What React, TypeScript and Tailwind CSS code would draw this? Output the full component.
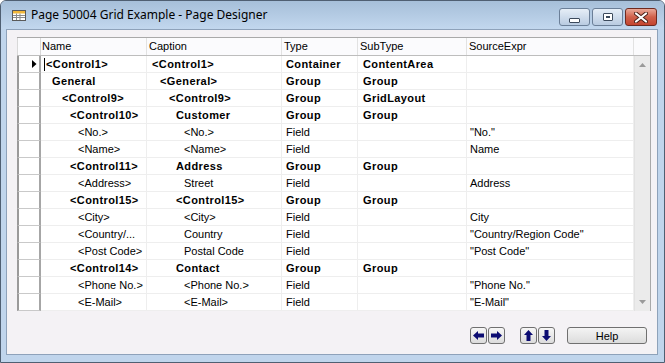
import React from 'react';

type Row = { n: string; c: string; t: string; s: string; e: string; l: number; b?: boolean };

const rows: Row[] = [
  { n: '<Control1>', c: '<Control1>', t: 'Container', s: 'ContentArea', e: '', l: 0, b: true },
  { n: 'General', c: '<General>', t: 'Group', s: 'Group', e: '', l: 1, b: true },
  { n: '<Control9>', c: '<Control9>', t: 'Group', s: 'GridLayout', e: '', l: 2, b: true },
  { n: '<Control10>', c: 'Customer', t: 'Group', s: 'Group', e: '', l: 3, b: true },
  { n: '<No.>', c: '<No.>', t: 'Field', s: '', e: '"No."', l: 4 },
  { n: '<Name>', c: '<Name>', t: 'Field', s: '', e: 'Name', l: 4 },
  { n: '<Control11>', c: 'Address', t: 'Group', s: 'Group', e: '', l: 3, b: true },
  { n: '<Address>', c: 'Street', t: 'Field', s: '', e: 'Address', l: 4 },
  { n: '<Control15>', c: '<Control15>', t: 'Group', s: 'Group', e: '', l: 3, b: true },
  { n: '<City>', c: '<City>', t: 'Field', s: '', e: 'City', l: 4 },
  { n: '<Country/...', c: 'Country', t: 'Field', s: '', e: '"Country/Region Code"', l: 4 },
  { n: '<Post Code>', c: 'Postal Code', t: 'Field', s: '', e: '"Post Code"', l: 4 },
  { n: '<Control14>', c: 'Contact', t: 'Group', s: 'Group', e: '', l: 3, b: true },
  { n: '<Phone No.>', c: '<Phone No.>', t: 'Field', s: '', e: '"Phone No."', l: 4 },
  { n: '<E-Mail>', c: '<E-Mail>', t: 'Field', s: '', e: '"E-Mail"', l: 4 },
];

const nameIndent = ['pl-[3px]', 'pl-[11px]', 'pl-[21px]', 'pl-[29px]', 'pl-[37px]'];
const capIndent = ['pl-[5px]', 'pl-[13px]', 'pl-[22px]', 'pl-[29px]', 'pl-[37px]'];

function CaptionButton({ kind }: { kind: 'min' | 'max' | 'close' }) {
  const base = 'h-[18px] rounded-[3px] border flex items-center justify-center';
  if (kind === 'close') {
    return (
      <div className={`${base} w-[32px] border-[#6e2a20] bg-gradient-to-b from-[#e9a898] via-[#d0614b] to-[#c4442f]`}>
        <svg width="14" height="11" viewBox="0 0 14 11">
          <path d="M2 1.5 L12 9.5 M12 1.5 L2 9.5" stroke="#4a2018" strokeWidth="4" strokeLinecap="round" />
          <path d="M2 1.5 L12 9.5 M12 1.5 L2 9.5" stroke="#ffffff" strokeWidth="2.2" strokeLinecap="round" />
        </svg>
      </div>
    );
  }
  return (
    <div className={`${base} w-[31px] border-[#6b7f98] bg-gradient-to-b from-[#e6eef7] to-[#b9cbe1]`}>
      {kind === 'min' ? (
        <div className="mt-[6px] w-[11px] h-[5px] rounded-[1px] border border-[#3c4a5c] bg-white" />
      ) : (
        <div className="w-[10px] h-[8px] rounded-[1px] border border-[#3c4a5c] bg-white flex items-center justify-center">
          <div className="w-[4px] h-[2px] bg-[#3c4a5c]" />
        </div>
      )}
    </div>
  );
}

function ArrowBtn({ dir }: { dir: 'left' | 'right' | 'up' | 'down' }) {
  const rot = { left: 0, right: 180, up: 90, down: 270 }[dir];
  return (
    <div className="w-[17px] h-[17px] rounded-[3px] border border-[#707070] bg-gradient-to-b from-[#f7f7f7] to-[#dcdcdc] flex items-center justify-center">
      <svg width="11" height="11" viewBox="0 0 11 11" style={{ transform: `rotate(${rot}deg)` }}>
        <polygon points="0,5.5 5,1 5,3.5 11,3.5 11,7.5 5,7.5 5,10" fill="#0c0c72" />
      </svg>
    </div>
  );
}

export default function App() {
  const f = "font-['Liberation_Sans',Arial,sans-serif] text-[11px] text-black leading-[16px]";
  const bold = 'font-bold tracking-[0.4px]';

  return (
    <div className="w-[665px] h-[363px] flex flex-col border border-[#4f5f72] rounded-t-[6px] bg-[#c0d5ec] overflow-hidden">
      {/* Title bar */}
      <div className="h-[28px] flex items-start bg-gradient-to-b from-[#a6bfd9] to-[#c2d7ee]">
        <div className="flex items-center h-[28px] pl-[11px] gap-[5px]">
          <svg width="14" height="11" viewBox="0 0 14 11">
            <rect x="0.5" y="0.5" width="13" height="10" fill="#ffffff" stroke="#5a5a5a" />
            <rect x="1" y="1" width="12" height="2.5" fill="#f1b73a" />
            <path d="M1 5.5 H13 M1 7.5 H13 M4.5 3.5 V10 M8 3.5 V10" stroke="#8a8a8a" strokeWidth="1" />
          </svg>
          <span className="font-['Noto_Sans',sans-serif] text-[12px] text-black">Page 50004 Grid Example - Page Designer</span>
        </div>
        <div className="ml-auto mr-[7px] mt-[7px] flex gap-[2px]">
          <CaptionButton kind="min" />
          <CaptionButton kind="max" />
          <CaptionButton kind="close" />
        </div>
      </div>

      {/* Client area */}
      <div className="ml-[5px] mr-[6px] mb-[7px] flex-1 border border-[#8ea2ba] bg-[#f4f2f5] pt-[7px] pl-[10px] flex flex-col">
        <div className={`w-[634px] border-t border-r border-[#a9a9a9] bg-white ${f}`}>
          {/* Header */}
          <div className="flex h-[18px] border-b border-[#bdbdbd] bg-[#fbfbfd]">
            <div className="w-[24px] border-l border-r border-[#d8d8d8]" />
            <div className="w-[106px] pl-[1px] border-r border-[#e2e2e2]">Name</div>
            <div className="w-[135px] pl-[2px] border-r border-[#e2e2e2]">Caption</div>
            <div className="w-[76px] pl-[2px] border-r border-[#e2e2e2]">Type</div>
            <div className="w-[109px] pl-[2px] border-r border-[#e2e2e2]">SubType</div>
            <div className="w-[167px] pl-[2px] border-r border-[#e2e2e2]">SourceExpr</div>
            <div className="w-[16px]" />
          </div>

          {/* Body */}
          <div className="flex">
            <div className="flex flex-col">
              {rows.map((r, i) => (
                <div key={i} className="flex h-[17px]">
                  <div className="w-[24px] border-l-2 border-r-2 border-b border-l-[#9a9a9a] border-r-[#a6a6a6] border-b-[#c9c9c9] bg-white flex items-center pl-[13px]">
                    {i === 0 && (
                      <svg width="5" height="8" viewBox="0 0 5 8">
                        <polygon points="0,0 4.5,4 0,8" fill="#000000" />
                      </svg>
                    )}
                  </div>
                  <div className={`w-[106px] border-r border-b border-[#eeeeee] flex items-center whitespace-nowrap overflow-hidden ${nameIndent[r.l]} ${r.b ? bold : ''}`}>
                    {i === 0 && <span className="w-px h-[13px] bg-black mr-px shrink-0" />}
                    {r.n}
                  </div>
                  <div className={`w-[135px] border-r border-b border-[#eeeeee] whitespace-nowrap overflow-hidden ${capIndent[r.l]} ${r.b ? bold : ''}`}>
                    {r.c}
                  </div>
                  <div className={`w-[76px] border-r border-b border-[#eeeeee] pl-[4px] ${r.b ? bold : ''}`}>{r.t}</div>
                  <div className={`w-[109px] border-r border-b border-[#eeeeee] pl-[5px] ${r.b ? bold : ''}`}>{r.s}</div>
                  <div className="w-[167px] border-r border-b border-[#eeeeee] pl-[3px] whitespace-nowrap">{r.e}</div>
                </div>
              ))}
            </div>
            {/* Scrollbar */}
            <div className="w-[16px] h-[255px] bg-[#ebebeb] border-l border-[#e2e2e2] flex flex-col items-center justify-between py-[7px]">
              <svg width="7" height="4" viewBox="0 0 7 4">
                <polygon points="3.5,0 7,4 0,4" fill="#9a9a9a" />
              </svg>
              <svg width="7" height="4" viewBox="0 0 7 4">
                <polygon points="0,0 7,0 3.5,4" fill="#9a9a9a" />
              </svg>
            </div>
          </div>
        </div>

        {/* Buttons */}
        <div className="mt-[16px] flex items-center w-[634px]">
          <div className="ml-auto flex gap-[1px]">
            <ArrowBtn dir="left" />
            <ArrowBtn dir="right" />
          </div>
          <div className="ml-[15px] flex gap-[1px]">
            <ArrowBtn dir="up" />
            <ArrowBtn dir="down" />
          </div>
          <div className={`ml-[12px] mr-[4px] w-[80px] h-[17px] rounded-[3px] border border-[#707070] bg-gradient-to-b from-[#f4f4f4] to-[#dcdcdc] flex items-center justify-center ${f}`}>
            Help
          </div>
        </div>
      </div>
    </div>
  );
}
